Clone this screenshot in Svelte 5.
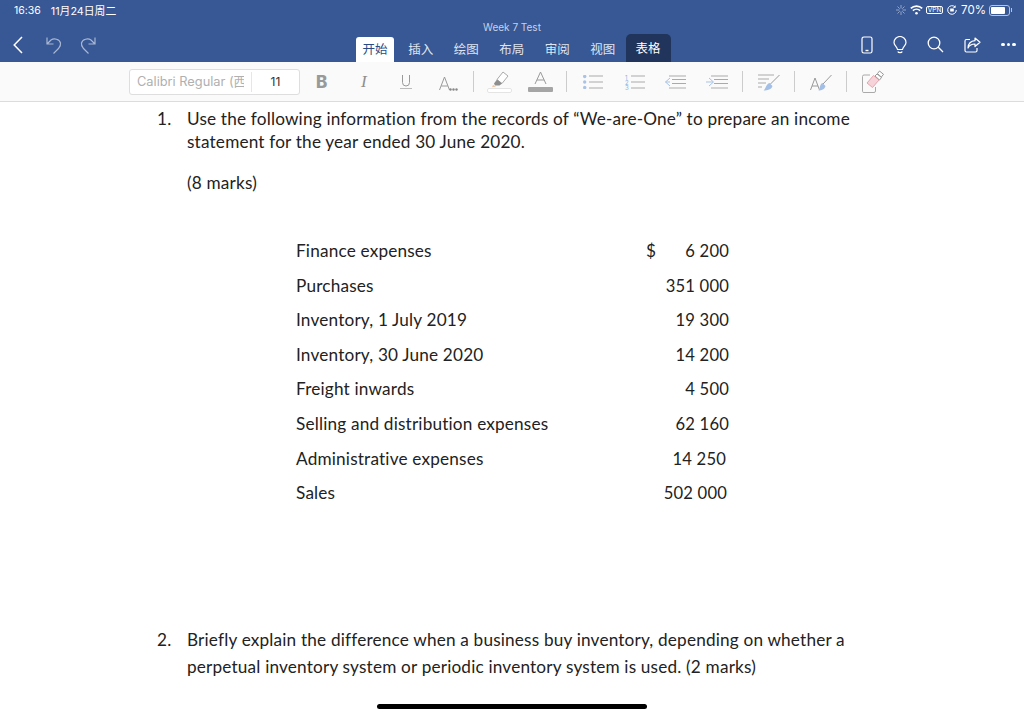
<script>
  const tabs = ['开始', '插入', '绘图', '布局', '审阅', '视图'];
  const rows = [
    ['Finance expenses', '6 200', 0],
    ['Purchases', '351 000', 0],
    ['Inventory, 1 July 2019', '19 300', 0],
    ['Inventory, 30 June 2020', '14 200', 0],
    ['Freight inwards', '4 500', 0],
    ['Selling and distribution expenses', '62 160', 0],
    ['Administrative expenses', '14 250', 3],
    ['Sales', '502 000', 2]
  ];
</script>

<div class="screen">
  <header class="top">
    <div class="status">
      <span class="clock">16:36</span>
      <span class="date">11月24日周二</span>
      <span class="spacer"></span>
      <svg class="sun" width="10" height="10" viewBox="0 0 10 10" stroke="#93a5c8" stroke-width="1"><path d="M5 0v3.500M5 6.500V10M0 5h3.500M6.500 5H10M1.500 1.500l2.200 2.200M8.500 8.500 6.300 6.300M8.500 1.500 6.300 3.700M1.500 8.500l2.200-2.200"/></svg>
      <svg class="wifi" width="13" height="10" viewBox="0 0 13 10" fill="none" stroke="#fff" stroke-width="1.700"><path d="M.8 3.400a8.200 8.200 0 0 1 11.400 0M2.900 5.700a5.200 5.200 0 0 1 7.200 0"/><circle cx="6.500" cy="8.300" r="1.300" fill="#fff" stroke="none"/></svg>
      <span class="vpn">VPN</span>
      <svg class="lock" width="10" height="10" viewBox="0 0 10 10" fill="none" stroke="#fff" stroke-width="1"><path d="M9.300 5a4.300 4.300 0 1 1-1.200-3"/><path d="M8.300 .5v2h-2" stroke-width=".8"/><rect x="3.200" y="3.500" width="3.600" height="3" fill="#fff" stroke="none"/></svg>
      <span class="pct">70%</span>
      <span class="battery"><i></i></span>
      <span class="nub"></span>
    </div>
    <div class="title">Week 7 Test</div>
    <div class="navrow">
      <div class="nav-left">
        <svg width="10" height="18" viewBox="0 0 10 18" fill="none" stroke="#fff" stroke-width="1.500"><path d="M9 1 1.200 9 9 17"/></svg>
        <svg class="undo" width="16" height="18" viewBox="0 0 16 18" fill="none" stroke="#a9b7d2" stroke-width="1.200"><path d="M1 1.500v6.500h6.500M1 8l4-4c3-2 8.500-1 9.500 3 .5 2.500-.8 4-2 5.500L7.500 17.500"/></svg>
        <svg class="redo" width="16" height="18" viewBox="0 0 16 18" fill="none" stroke="#a9b7d2" stroke-width="1.200"><path d="M15 1.500v6.500H8.500M15 8l-4-4C8 2 2.500 3 1.500 7c-.5 2.500.8 4 2 5.500l5 5"/></svg>
      </div>
      <nav class="tabs">
        {#each tabs as t, i}
          <span class="tab" class:active={i === 0}>{t}</span>
        {/each}
        <span class="tab table">表格</span>
      </nav>
      <div class="nav-right">
        <svg width="12" height="18" viewBox="0 0 12 18" fill="none" stroke="#fff" stroke-width="1.200"><rect x="1" y="1" width="10" height="16" rx="1.800"/><path d="M4.500 14.500h3" stroke-width="1.400"/></svg>
        <svg width="14" height="18" viewBox="0 0 14 18" fill="none" stroke="#fff" stroke-width="1.200"><path d="M4.500 13.500C4 10.500 1 9.500 1 6.500a6 6 0 0 1 12 0c0 3-3 4-3.500 7zM4.800 15.500c.5 1.500 4 1.500 4.400 0"/></svg>
        <svg width="17" height="17" viewBox="0 0 17 17" fill="none" stroke="#fff" stroke-width="1.300"><circle cx="7" cy="7" r="5.800"/><path d="M11.300 11.300 16 16"/></svg>
        <svg width="17" height="16" viewBox="0 0 17 16" fill="none" stroke="#fff" stroke-width="1.200"><path d="M6 2.500H2.500Q1 2.500 1 4v9.500Q1 15 2.500 15h9q1.500 0 1.500-1.500V11"/><path d="M11 1l5 4.300-5 4.200V7C7.500 7 5.500 8 4 11c.3-4.500 3-7 7-7.300z" stroke-linejoin="round"/></svg>
        <span class="dots"><i></i><i></i><i></i></span>
      </div>
    </div>
  </header>

  <div class="toolbar">
    <div class="fontbox">
      <span class="fname"><span class="fclip">Calibri Regular (西</span></span>
      <span class="fsize">11</span>
    </div>
    <span class="bold">B</span>
    <span class="italic">I</span>
    <svg class="t-u" width="12" height="15" viewBox="0 0 12 15" fill="none" stroke="#999"><path d="M2.500 1v7.500a3.500 3.500 0 0 0 7 0V1"/><path d="M0 14.500h12" stroke="#bbb"/></svg>
    <span class="a-more">
      <svg width="19" height="15" viewBox="0 0 19 15" fill="none"><path d="M.5 14 5.500 1l5 13M2.300 10h6.400" stroke="#999"/><circle cx="11.500" cy="13.500" r="1.200" fill="#888"/><circle cx="14.500" cy="13.500" r="1.200" fill="#888"/><circle cx="17.500" cy="13.500" r="1.200" fill="#888"/></svg>
    </span>
    <span class="sep s1"></span>
    <svg class="hl" width="25" height="22" viewBox="0 0 25 22" fill="none"><path d="M16 1l5 4-6 7.500-5-4z" stroke="#aaa" fill="#fff"/><path d="M10 8.500l5 4-2.500 2H8l-1-2z" fill="#8f8f8f"/><path d="M6 14l3 1.500-4 .8z" fill="#efc29c"/><rect x=".5" y="17.500" width="24" height="4" rx="1.500" stroke="#e4e4e4" fill="#fff"/></svg>
    <span class="color-a">
      <svg width="13" height="13" viewBox="0 0 13 13" fill="none" stroke="#999"><path d="M1 13 6.500 1 12 13M3 9h7"/></svg>
      <i></i>
    </span>
    <span class="sep s2"></span>
    <svg class="list" width="20" height="14" viewBox="0 0 20 14" fill="none"><circle cx="1.700" cy="1.500" r="1.700" fill="#a9c3e6"/><circle cx="1.700" cy="7" r="1.700" fill="#a9c3e6"/><circle cx="1.700" cy="12.500" r="1.700" fill="#a9c3e6"/><path d="M6 1h14M6 7h14M6 13h14" stroke="#aaa"/></svg>
    <span class="num">
      <span class="digits"><i>1</i><i>2</i><i>3</i></span>
      <svg width="14" height="14" viewBox="0 0 14 14" fill="none" stroke="#aaa"><path d="M0 1h14M0 7h14M0 13h14"/></svg>
    </span>
    <svg class="out" width="22" height="14" viewBox="0 0 22 14" fill="none"><path d="M6 3 1.500 7 6 11M1.500 7H6" stroke="#a9c3e6"/><path d="M5 1h17M8 4.500h14M8 8.500h14" stroke="#aaa"/><path d="M5 13h17" stroke="#d4d4d4" stroke-width="2"/></svg>
    <svg class="ind" width="22" height="14" viewBox="0 0 22 14" fill="none"><path d="M3 3l4.500 4L3 11M0 7h7" stroke="#a9c3e6"/><path d="M5 1h17M8 4.500h14M8 8.500h14" stroke="#aaa"/><path d="M5 13h17" stroke="#d4d4d4" stroke-width="2"/></svg>
    <span class="sep s3"></span>
    <svg class="para" width="22" height="17" viewBox="0 0 22 17" fill="none"><path d="M0 1h16M0 5h11M0 9h8M0 13h4" stroke="#aaa"/><path d="M21.500 1 12 10.500" stroke="#999"/><path d="M11.500 9l3 3c-1 3.500-5 4.500-9 4.500 2-1 2.500-6.500 6-7.500z" fill="#a3bfe6"/></svg>
    <span class="sep s4"></span>
    <svg class="style" width="22" height="17" viewBox="0 0 22 17" fill="none"><path d="M.5 16 5 4l4.500 12M2 12h6" stroke="#999"/><path d="M21.500 1 13 10" stroke="#999"/><path d="M12.500 9l3 3c-1 3.500-4 4.500-7 4.500 1.500-1 1-6.500 4-7.500z" fill="#a3bfe6"/></svg>
    <span class="sep s5"></span>
    <svg class="clear" width="22" height="23" viewBox="0 0 22 23" fill="none"><path d="M8 5H2Q.5 5 .5 6.500v15Q.5 22.500 2 22.500h10q1.500 0 1.500-1.500v-4" stroke="#aaa"/><path d="M5 13l6.500-7.500 5.500 4.500-6.500 7.500z" fill="#f6d3d8" stroke="#e2a7ae"/><path d="M13 6l2-2 4.500 3.500-2 2.500z" fill="#fff" stroke="#999"/><path d="M15.500 3.500l2-2.500 4 3.300-2.200 2.800z" fill="#fff" stroke="#999"/></svg>
  </div>

  <main class="doc">
    <div class="q q1">
      <span class="n">1.</span>
      <p>Use the following information from the records of “We-are-One” to prepare an income<br />statement for the year ended 30 June 2020.</p>
    </div>
    <p class="marks">(8 marks)</p>
    <div class="rows">
      {#each rows as [label, value, shift], i}
        <div class="row">
          <span class="label">{label}</span>
          <span class="dollar">{i === 0 ? '$' : ''}</span>
          <span class="val" style="margin-right: {shift}px">{value}</span>
        </div>
      {/each}
    </div>
    <div class="q q2">
      <span class="n">2.</span>
      <p>Briefly explain the difference when a business buy inventory, depending on whether a<br />perpetual inventory system or periodic inventory system is used. (2 marks)</p>
    </div>
  </main>
  <div class="home"></div>
</div>

<style>
  :global(body) {
    margin: 0;
    background: #fff;
  }
  .screen {
    position: relative;
    width: 1024px;
    height: 715px;
    overflow: hidden;
    font-family: "Lato", "Noto Sans CJK SC", sans-serif;
    font-variant-ligatures: none;
    color: #222;
  }
  .top {
    height: 62px;
    background: #385795;
    color: #fff;
    font-family: "Inter", "Noto Sans CJK SC", sans-serif;
  }
  .status {
    display: flex;
    align-items: center;
    height: 20px;
    padding: 0 12px 0 14px;
    font-size: 10.500px;
  }
  .date {
    margin-left: 10px;
    font-size: 10.800px;
  }
  .spacer {
    flex: 1;
  }
  .sun {
    margin-right: 4px;
  }
  .wifi {
    margin-right: 3px;
  }
  .vpn {
    width: 17px;
    box-sizing: border-box;
    text-align: center;
    font-size: 6.500px;
    border: 1px solid #fff;
    border-radius: 2px;
    line-height: 6px;
    margin-right: 4px;
  }
  .lock {
    margin-right: 4px;
  }
  .pct {
    font-size: 11.500px;
    margin-right: 3px;
  }
  .battery {
    width: 21px;
    height: 11px;
    box-sizing: border-box;
    border: 1px solid #b7c3db;
    border-radius: 3px;
    padding: 1px;
    display: flex;
  }
  .battery i {
    width: 14px;
    background: #fff;
    border-radius: 1px;
  }
  .nub {
    width: 1px;
    height: 4px;
    background: #b7c3db;
    margin-left: 1px;
  }
  .title {
    text-align: center;
    font-size: 10px;
    line-height: 12px;
    margin-top: 1px;
    color: #c7d1e5;
  }
  .navrow {
    display: flex;
    height: 29px;
  }
  .nav-left {
    display: flex;
    align-items: center;
    padding-left: 13px;
    width: 343px;
    margin-top: -6px;
  }
  .undo {
    margin-left: 23px;
  }
  .redo {
    margin-left: 18px;
  }
  .tabs {
    display: flex;
    align-items: flex-end;
    width: 480px;
  }
  .tab {
    width: 45.500px;
    height: 25px;
    font-size: 12.500px;
    line-height: 25px;
    text-align: center;
    color: #dfe5f0;
  }
  .tab.active {
    width: 38px;
    background: #fff;
    color: #2a4a85;
    border-radius: 3px 3px 0 0;
    margin-right: 4px;
  }
  .tab.table {
    background: #20345c;
    color: #fff;
    width: 45px;
    height: 28px;
    line-height: 29px;
    border-radius: 5px 5px 0 0;
  }
  .nav-right {
    flex: 1;
    display: flex;
    align-items: center;
    margin-top: -6px;
    padding-left: 25px;
    gap: 20px;
  }
  .dots {
    display: flex;
    gap: 2px;
  }
  .dots i {
    width: 3.500px;
    height: 3.500px;
    border-radius: 50%;
    background: #fff;
  }
  .toolbar {
    height: 39px;
    background: #fafafa;
    border-bottom: 1px solid #dcdcdc;
    display: flex;
    align-items: center;
    padding-left: 129px;
    color: #8f8f8f;
    font-family: "Inter", "Noto Sans CJK SC", sans-serif;
  }
  .toolbar > * {
    flex: none;
  }
  .fontbox {
    width: 171px;
    height: 26px;
    box-sizing: border-box;
    background: #fff;
    border: 1px solid #dedede;
    border-radius: 3px;
    display: flex;
    align-items: center;
    font-size: 12.800px;
  }
  .fname {
    width: 122px;
    padding: 0 7px;
    box-sizing: border-box;
    border-right: 1px solid #e6e6e6;
    line-height: 20px;
  }
  .fclip {
    display: block;
    white-space: nowrap;
    overflow: hidden;
    color: #b0b0b0;
  }
  .fsize {
    flex: 1;
    text-align: center;
    color: #333;
    font-size: 12px;
  }
  .bold {
    font-weight: 800;
    font-size: 17px;
    margin-left: 16px;
    width: 12px;
    color: #999;
  }
  .italic {
    font-family: "Liberation Serif", serif;
    font-style: italic;
    font-size: 17px;
    margin-left: 33px;
    width: 6px;
  }
  .t-u {
    margin-left: 33px;
  }
  .a-more {
    margin-left: 27px;
    width: 19px;
    height: 15px;
    margin-top: 1px;
  }
  .sep {
    width: 1px;
    height: 21px;
    background: #ccc;
  }
  .s1 {
    margin-left: 15px;
  }
  .hl {
    margin-left: 13px;
  }
  .color-a {
    margin-left: 16px;
    width: 25px;
    display: flex;
    flex-direction: column;
    align-items: center;
  }
  .color-a i {
    display: block;
    width: 25px;
    height: 5px;
    background: #a5a5a5;
    border-radius: 1px;
    margin-top: 3px;
  }
  .s2 {
    margin-left: 13px;
  }
  .list {
    margin-left: 16px;
  }
  .num {
    margin-left: 22px;
    width: 20px;
    display: flex;
    justify-content: space-between;
  }
  .digits {
    display: flex;
    flex-direction: column;
    justify-content: space-between;
    font-size: 6px;
    line-height: 5px;
    height: 14px;
    color: #8fb0de;
  }
  .digits i {
    font-style: normal;
  }
  .out {
    margin-left: 19px;
  }
  .ind {
    margin-left: 20px;
  }
  .s3 {
    margin-left: 14px;
  }
  .para {
    margin-left: 15px;
    margin-top: 2px;
  }
  .s4 {
    margin-left: 14px;
  }
  .style {
    margin-left: 15px;
    margin-top: 2px;
  }
  .s5 {
    margin-left: 14px;
  }
  .clear {
    margin-left: 15px;
  }
  .doc {
    padding: 5px 0 0 157px;
    font-size: 17.200px;
    letter-spacing: 0.180px;
    line-height: 23px;
    color: #222;
  }
  .q {
    display: flex;
  }
  .n {
    width: 30px;
  }
  p {
    margin: 0;
  }
  .marks {
    margin: 18px 0 0 30px;
  }
  .rows {
    margin: 40px 0 0 139px;
    width: 433px;
  }
  .row {
    display: flex;
    height: 34.600px;
    line-height: 34.600px;
  }
  .label {
    width: 350px;
  }
  .dollar {
    flex: 1;
  }
  .val {
    font-size: 16.600px;
  }
  .q2 {
    margin-top: 115px;
    line-height: 27px;
  }
  .home {
    position: absolute;
    left: 377px;
    top: 704px;
    width: 270px;
    height: 5px;
    border-radius: 3px;
    background: #000;
  }
</style>
